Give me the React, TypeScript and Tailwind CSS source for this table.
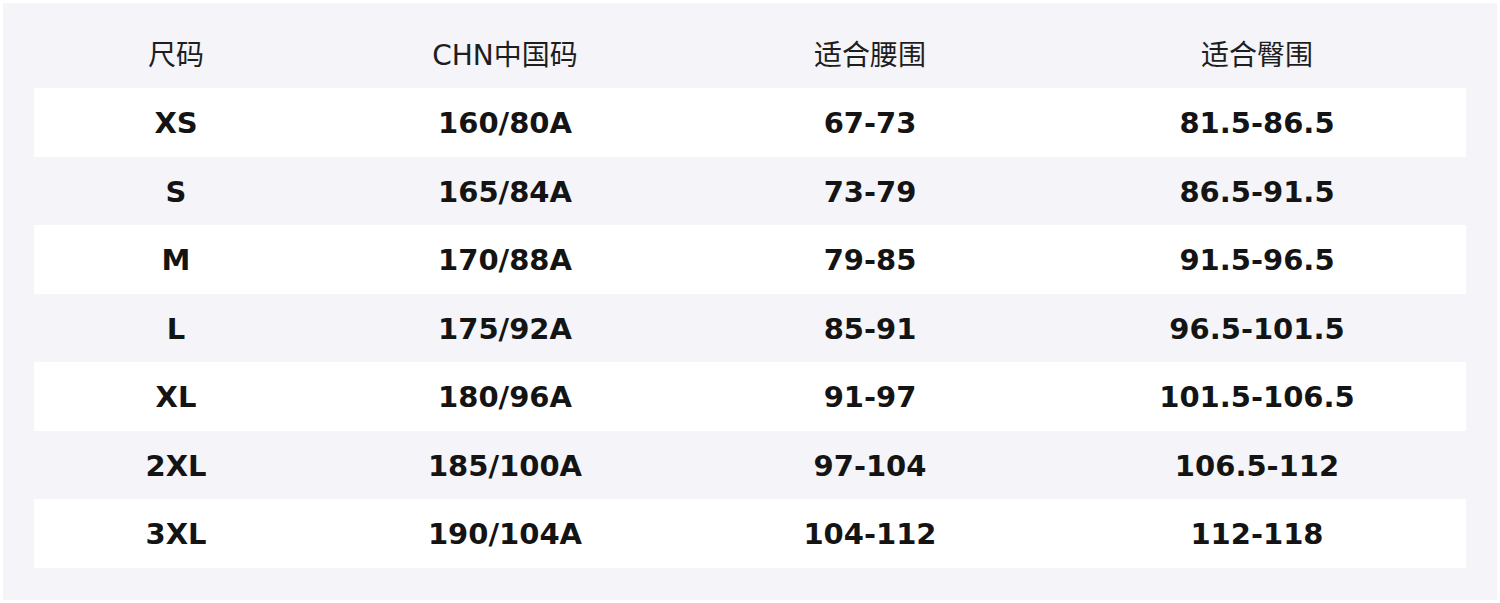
import React from "react";

const rows = [
  ["XS", "160/80A", "67-73", "81.5-86.5"],
  ["S", "165/84A", "73-79", "86.5-91.5"],
  ["M", "170/88A", "79-85", "91.5-96.5"],
  ["L", "175/92A", "85-91", "96.5-101.5"],
  ["XL", "180/96A", "91-97", "101.5-106.5"],
  ["2XL", "185/100A", "97-104", "106.5-112"],
  ["3XL", "190/104A", "104-112", "112-118"],
];

const widths = ["w-[284px]", "w-[374px]", "w-[356px]", "w-[418px]"];

export default function App() {
  return (
    <div className="w-[1500px] h-[603px] bg-white p-[3px]">
      <div
        className="w-full h-[597px] bg-[#f4f4f9] pt-[16px] px-[31px]"
        style={{ fontFamily: '"DejaVu Sans", "Noto Sans CJK SC", sans-serif' }}
      >
        <div className="flex h-[69px] items-center pt-[4px] text-[28px] text-[#1e1e1e]">
          {["尺码", "CHN中国码", "适合腰围", "适合臀围"].map((h, i) => (
            <div key={i} className={`${widths[i]} text-center`}>
              {h}
            </div>
          ))}
        </div>
        {rows.map((r, ri) => (
          <div
            key={ri}
            className={`flex h-[68.5px] items-center pt-[3px] text-[29px] font-bold text-[#141414] ${
              ri % 2 === 0 ? "bg-white" : "bg-transparent"
            }`}
          >
            {r.map((c, i) => (
              <div key={i} className={`${widths[i]} text-center`}>
                {c}
              </div>
            ))}
          </div>
        ))}
      </div>
    </div>
  );
}
